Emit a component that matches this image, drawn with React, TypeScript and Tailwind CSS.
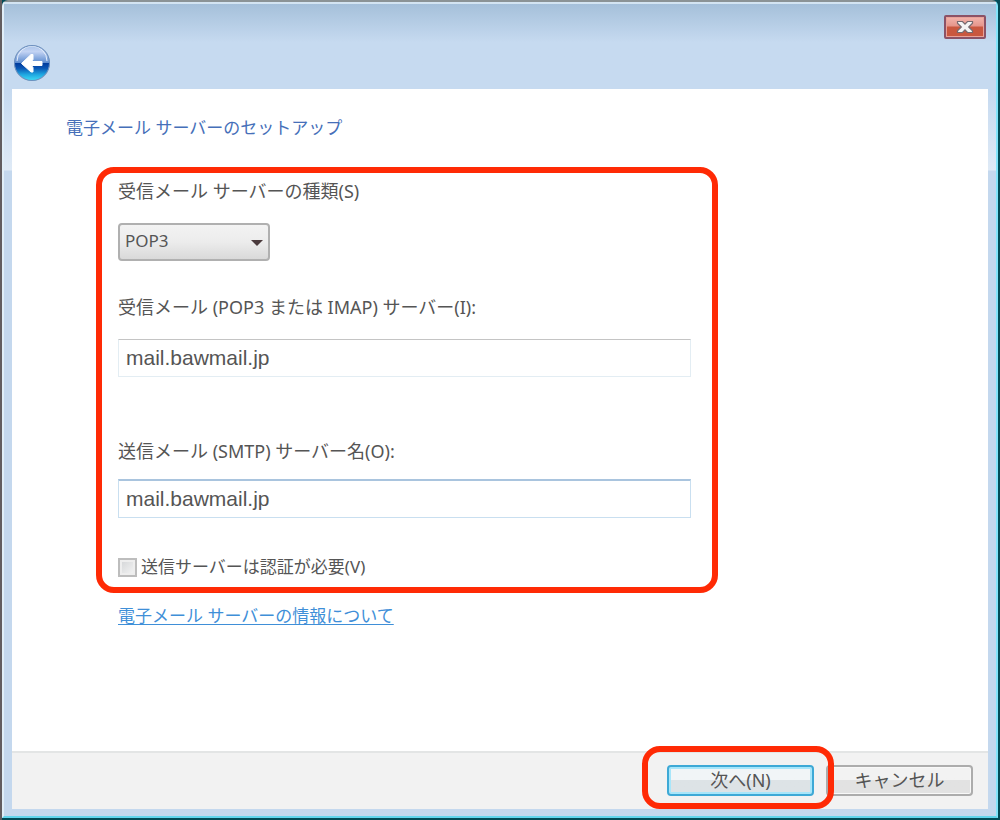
import React, { useState } from 'react';

interface ServerSettings {
  type: string;
  incoming: string;
  outgoing: string;
  requiresAuth: boolean;
}

const BackIcon: React.FC = () => (
  <svg viewBox="0 0 38 38" className="h-[38px] w-[38px]" aria-hidden="true">
    <defs>
      <linearGradient id="orbTop" x1="0" y1="0" x2="0" y2="1">
        <stop offset="0" stopColor="#a9c4ea" />
        <stop offset="0.35" stopColor="#c3d3f3" />
        <stop offset="1" stopColor="#5b8bcf" />
      </linearGradient>
      <linearGradient id="orbBottom" x1="0" y1="0" x2="0" y2="1">
        <stop offset="0" stopColor="#003a9c" />
        <stop offset="0.3" stopColor="#0a56b4" />
        <stop offset="0.65" stopColor="#1fa5e0" />
        <stop offset="1" stopColor="#3edcf5" />
      </linearGradient>
    </defs>
    <circle cx="19" cy="19" r="18" fill="#8fa9ca" />
    <path d="M1.5 19a17.5 17.5 0 0 1 35 0z" fill="url(#orbTop)" />
    <path d="M1.5 19a17.5 17.5 0 0 0 35 0z" fill="url(#orbBottom)" />
    <path d="M4 17a15 15 0 0 1 30 0" fill="none" stroke="#e4eefb" strokeWidth="1" />
    <circle cx="19" cy="19" r="17.5" fill="none" stroke="#6d90bf" strokeWidth="1" />
    <path
      d="M8.5 19.500 18 10.500h2v5l-1.500 2H29v4H18.500l1.500 2v4.500H18z"
      fill="#fff"
      stroke="#fff"
      strokeWidth="1"
      strokeLinejoin="round"
    />
  </svg>
);

const CloseIcon: React.FC = () => (
  <svg viewBox="0 0 18 14" className="h-[14px] w-[18px]" aria-hidden="true">
    <path
      d="M1.5 1.5h5L9 4.2l2.5-2.7h5v1.8L12.7 7l3.8 3.7v1.8h-5L9 9.8l-2.5 2.7h-5v-1.8L5.3 7 1.5 3.3z"
      fill="#f4f4f4"
      stroke="#75696f"
      strokeWidth="1.2"
    />
  </svg>
);

const TextField: React.FC<{
  id: string;
  label: string;
  value: string;
  className: string;
  onChange: (value: string) => void;
}> = ({ id, label, value, className, onChange }) => (
  <div className="flex flex-col items-start">
    <label htmlFor={id} className="text-[18px] leading-6">
      {label}
    </label>
    <input
      id={id}
      type="text"
      value={value}
      onChange={e => onChange(e.target.value)}
      className={`w-full border bg-white px-[7px] font-['Liberation_Sans','Noto_Sans_CJK_JP',sans-serif] text-[21px] text-[#555] outline-none ${className}`}
    />
  </div>
);

export default function App() {
  const [settings, setSettings] = useState<ServerSettings>({
    type: 'POP3',
    incoming: 'mail.bawmail.jp',
    outgoing: 'mail.bawmail.jp',
    requiresAuth: false,
  });

  return (
    <div className="flex min-h-screen bg-linear-to-r from-[#625d60] from-[2px] to-[#034c58] to-[2px] px-[2px] pb-[2px] font-['Noto_Sans','Noto_Sans_CJK_JP',sans-serif] text-[17px] text-[#555]">
      <div className="flex flex-1 flex-col rounded-t-md border-2 border-t-[#8b9396] border-r-[#83e4fa] border-b-[#62d5ed] border-l-[#e0eef8] bg-linear-to-b from-[#c6daf0] from-[90px] via-[#dfeaf6] via-[168px] to-[#c4d8ee] to-[169px] px-2 pb-[7px]">
        <header className="-mx-2 flex h-[87px] flex-col border-t-2 border-[#d3e4f2] bg-linear-to-b from-[#a5c0da] to-[#c6daf0] to-45% px-[9px]">
          <div className="flex h-9 justify-end pt-[11px] pr-px">
            <button
              type="button"
              aria-label="閉じる"
              className="flex h-6 w-[42px] items-center justify-center rounded-xs border-2 border-[#8b5266] bg-linear-to-b from-[#f3b5ad] from-0% via-[#e5958b] via-45% to-[#c9573f] to-50% shadow-[inset_0_0_0_1px_#e9a198]"
            >
              <CloseIcon />
            </button>
          </div>
          <button type="button" aria-label="戻る" className="mt-1 self-start">
            <BackIcon />
          </button>
        </header>

        <main className="flex flex-1 flex-col items-start bg-white pt-[27px] pr-4 pl-[54px]">
          <h1 className="leading-6 text-[#466fb9]">電子メール サーバーのセットアップ</h1>

          <form className="mt-[27px] ml-[30px] flex w-full max-w-[622px] flex-col items-stretch rounded-[18px] border-6 border-[#ff2a05] pt-[6px] pr-[21px] pb-2 pl-4">
            <label htmlFor="server-type" className="text-[18px] leading-6">
              受信メール サーバーの種類(S)
            </label>
            <div className="relative mt-5 w-[152px]">
              <select
                id="server-type"
                value={settings.type}
                onChange={e => setSettings(prev => ({ ...prev, type: e.target.value }))}
                className="block h-[38px] w-full appearance-none rounded-sm border-2 border-[#b0b0b0] bg-linear-to-b from-[#f3f3f3] via-[#ececec] via-50% to-[#d9d9d9] px-[5px] pb-[2px] outline-none"
              >
                <option>POP3</option>
                <option>IMAP</option>
              </select>
              <svg
                viewBox="0 0 12 6"
                className="pointer-events-none absolute top-[17px] right-[7px] h-[6px] w-3"
                aria-hidden="true"
              >
                <path d="M0 0h12L6 6z" fill="#4a3a3c" />
              </svg>
            </div>

            <div className="mt-[34px]">
              <TextField
                id="incoming"
                label="受信メール (POP3 または IMAP) サーバー(I):"
                value={settings.incoming}
                className="mt-5 h-[38px] border-[#e3edf3] border-t-[#c4c4c4]"
                onChange={incoming => setSettings(prev => ({ ...prev, incoming }))}
              />
            </div>
            <div className="mt-[62px]">
              <TextField
                id="outgoing"
                label="送信メール (SMTP) サーバー名(O):"
                value={settings.outgoing}
                className="mt-4 h-[39px] border-[#c9dff0] border-t-2 border-t-[#a9c4de]"
                onChange={outgoing => setSettings(prev => ({ ...prev, outgoing }))}
              />
            </div>

            <div className="mt-[37px] flex items-center gap-1">
              <input
                id="auth"
                type="checkbox"
                checked={settings.requiresAuth}
                onChange={e => setSettings(prev => ({ ...prev, requiresAuth: e.target.checked }))}
                className="h-[19px] w-[19px] appearance-none border-2 border-[#bdbdbd] bg-linear-to-br from-[#d2d4d6] to-[#f6f6f6] shadow-[inset_0_0_0_2px_#eeeeee] checked:bg-[#4a6f9c]"
              />
              <label htmlFor="auth" className="leading-6">
                送信サーバーは認証が必要(V)
              </label>
            </div>
          </form>

          <a
            href="#server-info"
            className="mt-[11px] ml-[52px] leading-6 text-[#3f8fd8] underline underline-offset-2"
          >
            電子メール サーバーの情報について
          </a>
        </main>

        <footer className="flex h-[58px] items-center justify-end gap-3 border-t-2 border-[#e3e5e5] bg-[#f2f2f2] pr-[15px] pb-[2px] text-[18px]">
          <div className="relative">
            <button
              type="button"
              className="block h-[31px] w-[147px] rounded-sm border-2 border-[#3da9d6] bg-linear-to-b from-[#f1f5f7] from-50% to-[#dde3e6] to-50% leading-6 shadow-[inset_0_0_0_2px_#a8e6fa]"
            >
              次へ(N)
            </button>
            <span className="pointer-events-none absolute -top-[19px] -right-5 -bottom-[13px] -left-[25px] z-10 rounded-[18px] border-6 border-[#ff2a05]" />
          </div>
          <button
            type="button"
            className="h-[31px] w-[147px] rounded-sm border-2 border-[#acacac] bg-linear-to-b from-[#f2f2f2] from-50% to-[#e2e2e2] to-50% leading-6 shadow-[inset_0_0_0_1px_#f8f8f8]"
          >
            キャンセル
          </button>
        </footer>
      </div>
    </div>
  );
}
